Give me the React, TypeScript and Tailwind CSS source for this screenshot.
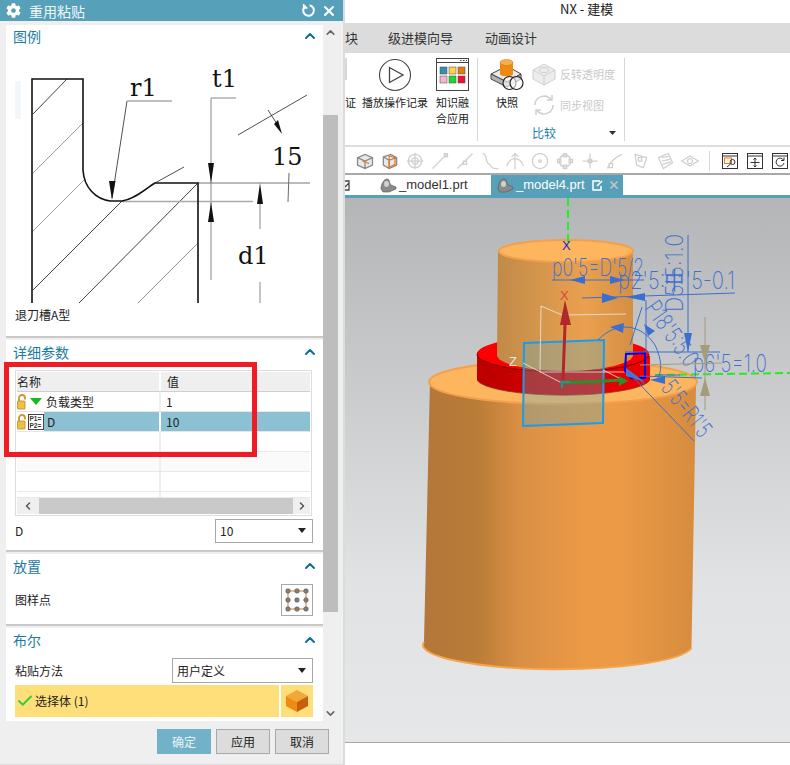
import React from 'react';
import { ChevronUp, ChevronDown, ChevronLeft, ChevronRight, X, Check } from 'lucide-react';
import { FaCog } from 'react-icons/fa';

const fontStack = { fontFamily: '"Noto Sans CJK SC", "Liberation Sans", sans-serif' };

const Lock: React.FC = () => (
  <svg width="11" height="16" viewBox="0 0 11 16" className="shrink-0">
    <path d="M2 8V4a3 3 0 0 1 6 0v1.5" fill="none" stroke="#c79a2b" strokeWidth="1.8" />
    <rect x="0.5" y="7" width="7.5" height="8" rx="0.5" fill="#f0c040" stroke="#b98a20" strokeWidth="0.8" />
  </svg>
);

const Caret: React.FC = () => (
  <svg width="8" height="5" viewBox="0 0 8 5" className="shrink-0">
    <path d="M0 0h8L4 5z" fill="#222" />
  </svg>
);

const Section: React.FC<{ title: string; className: string; headerClass?: string; children: React.ReactNode }> = ({ title, className, headerClass = 'h-[24px]', children }) => (
  <section className={`bg-white border-b-2 border-[#c9c9c9] shrink-0 ${className}`}>
    <div className={`flex items-center justify-between pl-[7px] pr-[5px] ${headerClass}`}>
      <span className="text-[14px] text-[#1c7ba3] leading-none">{title}</span>
      <ChevronUp size={16} strokeWidth={3} className="text-[#0f6f92]" />
    </div>
    {children}
  </section>
);

const Illustration: React.FC = () => (
  <svg width="317" height="258" viewBox="6 47 317 258" className="block" style={{ fontFamily: '"DejaVu Serif", serif' }}>
    <rect x="15" y="81" width="6" height="38" rx="2" fill="#f2f7fc" />
    <g stroke="#555" strokeWidth="0.8" fill="none">
      <path d="M33 114 67 79" stroke="#111" />
      <path d="M33 173 83 123" stroke="#888" />
      <path d="M33 231 84 180" stroke="#888" />
      <path d="M33 290 122 201" stroke="#111" />
      <path d="M79 303 198 183" stroke="#111" />
      <path d="M138 303 198 243" stroke="#777" />
      <path d="M155 183 184 167" stroke="#222" />
      <path d="M127 101 112 198" stroke="#222" />
      <path d="M238 135 307 95" stroke="#222" />
      <path d="M268 110 277 124" stroke="#222" />
      <path d="M289 173 288 202" stroke="#444" />
    </g>
    <path d="M127 101H172" stroke="#aaa" strokeWidth="1.5" />
    <path d="M211 280V98H236" fill="none" stroke="#888" strokeWidth="1" />
    <path d="M198 183H310" stroke="#777" strokeWidth="1" />
    <path d="M122 201.5H253" stroke="#aaa" strokeWidth="1.6" />
    <path d="M260 204V229M260 282V303" stroke="#888" strokeWidth="1" />
    <path d="M32 303V79H83V170C84 188 96 199 110 201H122C135 199 145 189 155 183H198V303" fill="none" stroke="#111" strokeWidth="1.6" />
    <path d="M112 200 109 181H115.500Z M211 183 208 163H214Z M211 202 208 222H214Z M260 183 257 204H263Z M282 134 274 124 278 120Z" fill="#111" />
    <text x="130" y="96" fontSize="24" fill="#111">r1</text>
    <text x="212" y="87" fontSize="24" fill="#111">t1</text>
    <text x="272" y="165" fontSize="24" fill="#111">15</text>
    <text x="238" y="264" fontSize="24" fill="#111">d1</text>
  </svg>
);

const ParamsTable: React.FC = () => (
  <div className="ml-[9px] mr-[11px] h-[146px] border border-[#dcdcdc] p-px flex flex-col overflow-hidden">
    <div className="h-[20px] flex bg-[#efefef] border-b border-[#cfcfcf] text-[12px] text-[#222] leading-[20px] shrink-0">
      <div className="w-[144px] border-r-2 border-white">名称</div>
      <div className="pl-[6px]">值</div>
    </div>
    <div className="h-[20px] flex border-b border-[#e6e6e6] text-[12px] text-[#222] shrink-0">
      <div className="w-[144px] border-r-2 border-[#eeeeee] flex items-center">
        <Lock />
        <svg width="12" height="7" viewBox="0 0 12 7" className="ml-[2px] mr-[4px]"><path d="M0 0h12L6 7z" fill="#1bb81b" /></svg>
        负载类型
      </div>
      <div className="pl-[5px] leading-[20px]">1</div>
    </div>
    <div className="h-[20px] flex border-b border-[#e6e6e6] text-[12px] text-[#222] shrink-0">
      <div className="w-[144px] border-r-2 border-white flex items-center">
        <Lock />
        <svg width="16" height="16" viewBox="0 0 16 16" className="shrink-0">
          <rect x="0.500" y="0.500" width="15" height="15" fill="#fff" stroke="#444" />
          <text x="1.500" y="7" fontSize="6.500" fontWeight="700" fill="#333" fontFamily="Liberation Sans">P1=</text>
          <text x="1.500" y="14" fontSize="6.500" fontWeight="700" fill="#333" fontFamily="Liberation Sans">P2=</text>
        </svg>
        <div className="flex-1 h-full bg-[#8cc1d3] pl-[3px] leading-[20px]">D</div>
      </div>
      <div className="flex-1 bg-[#8cc1d3] pl-[5px] leading-[20px]">10</div>
    </div>
    {['bg-white', 'bg-[#fafafa]', 'bg-white', 'bg-white'].map((bg, i) => (
      <div key={i} className={`${i === 3 ? 'h-[6px]' : 'h-[20px]'} flex border-b border-[#e9e9e9] shrink-0 ${bg}`}>
        <div className="w-[144px] border-r-2 border-[#eeeeee]" />
      </div>
    ))}
    <div className="h-[16px] bg-[#efefef] flex items-center shrink-0">
      <div className="w-[22px] flex justify-center"><ChevronLeft size={12} strokeWidth={3} className="text-[#555]" /></div>
      <div className="w-[254px] h-full bg-[#c9c9c9]" />
      <div className="flex-1 flex justify-center"><ChevronRight size={12} strokeWidth={3} className="text-[#555]" /></div>
    </div>
  </div>
);

const Select: React.FC<{ value: string; className: string }> = ({ value, className }) => (
  <div className={`border border-[#a8a8a8] bg-white flex items-center justify-between pl-[4px] pr-[6px] text-[12px] text-[#222] ${className}`}>
    <span>{value}</span>
    <Caret />
  </div>
);

const PatternIcon: React.FC = () => (
  <svg width="24" height="24" viewBox="0 0 24 24">
    <rect x="3" y="3" width="18" height="18" fill="none" stroke="#e0791a" strokeWidth="1" />
    {[3, 12, 21].map((y) => [3, 12, 21].map((x) => (
      <circle key={`${x}-${y}`} cx={x} cy={y} r="2.300" fill="#808080" stroke="#444" strokeWidth="0.500" />
    )))}
  </svg>
);

const CubeIcon: React.FC = () => (
  <svg width="24" height="24" viewBox="0 0 24 24">
    <path d="M12 1 23 7 12 13 1 7Z" fill="#f3a63a" />
    <path d="M1 7 12 13V23L1 17Z" fill="#ef8a12" />
    <path d="M23 7 12 13V23L23 17Z" fill="#c75f0c" />
  </svg>
);

const ActionButton: React.FC<{ label: string; primary?: boolean }> = ({ label, primary }) => (
  <div className={`w-[54px] h-[25px] flex items-center justify-center text-[12px] ${primary ? 'bg-[#72b2c8] text-[#e8f3f6]' : 'bg-[#dcdcdc] border border-[#a8a8a8] text-[#222]'}`}>
    {label}
  </div>
);

const Dialog: React.FC = () => (
  <div className="relative w-[345px] h-[765px] shrink-0 bg-[#efefef] border-r-2 border-b border-[#dcdcdc] flex flex-col">
    <header className="h-[21px] bg-[#57a0ba] flex items-center text-white shrink-0 pl-[6px] pr-[6px]">
      <FaCog size={15} />
      <span className="ml-[8px] text-[14px] leading-none text-[#eef6f8]">重用粘贴</span>
      <svg width="15" height="15" viewBox="0 0 14 14" className="ml-auto" fill="none" stroke="#fff" strokeWidth="1.900">
        <path d="M4.500 2.600A5 5 0 1 0 8 2" />
        <path d="M2.500 1v3.500H6" strokeWidth="1.500" />
      </svg>
      <X size={16} strokeWidth={3} className="ml-[5px]" />
    </header>
    <div className="h-[700px] flex pl-[6px] pt-[4px] overflow-hidden shrink-0">
      <div className="w-[317px] flex flex-col gap-[2px] overflow-hidden">
        <Section title="图例" className="h-[313px]" headerClass="h-[22px]">
          <Illustration />
          <div className="pl-[9px] text-[12px] text-[#222] leading-[16px] mt-[2px]">退刀槽A型</div>
        </Section>
        <Section title="详细参数" className="h-[212px]">
          <div className="pt-[6px]"><ParamsTable /></div>
          <div className="flex items-center justify-between pl-[9px] pr-[10px] h-[23px] mt-[3px] text-[12px] text-[#222]">
            <span>D</span>
            <Select value="10" className="w-[98px] h-[24px]" />
          </div>
        </Section>
        <Section title="放置" className="h-[72px]">
          <div className="flex items-center justify-between pl-[9px] pr-[10px] text-[12px] text-[#222] mt-[6px]">
            <span>图样点</span>
            <div className="w-[32px] h-[32px] border border-[#a8a8a8] flex items-center justify-center"><PatternIcon /></div>
          </div>
        </Section>
        <div className="bg-white shrink-0 h-[93px]">
          <div className="h-[24px] flex items-center justify-between pl-[7px] pr-[5px]">
            <span className="text-[14px] text-[#1c7ba3] leading-none">布尔</span>
            <ChevronUp size={16} strokeWidth={3} className="text-[#0f6f92]" />
          </div>
          <div className="flex items-center justify-between pl-[9px] pr-[10px] h-[25px] mt-[6px] text-[12px] text-[#222]">
            <span>粘贴方法</span>
            <Select value="用户定义" className="w-[141px] h-[25px]" />
          </div>
          <div className="flex gap-[2px] pl-[9px] pr-[10px] mt-[2px] h-[32px] text-[12px] text-[#222]">
            <div className="flex-1 bg-[#ffdf7a] flex items-center pl-px">
              <Check size={18} strokeWidth={2.500} className="text-[#2ecf3a] mr-[1px]" />
              选择体 (1)
            </div>
            <div className="w-[32px] bg-[#ffdf7a] flex items-center justify-center"><CubeIcon /></div>
          </div>
        </div>
      </div>
      <div className="w-[15px] flex flex-col items-center text-[#666] shrink-0">
        <ChevronUp size={13} strokeWidth={3} className="mt-[1px] mb-[76px] shrink-0" />
        <div className="w-full h-[497px] bg-[#bdbdbd] shrink-0" />
        <ChevronDown size={13} strokeWidth={3} className="mt-[95px] shrink-0" />
      </div>
    </div>
    <footer className="flex-1 flex gap-[5px] pl-[157px] pt-[8px]">
      <ActionButton label="确定" primary />
      <ActionButton label="应用" />
      <ActionButton label="取消" />
    </footer>
    <div className="absolute left-[4px] top-[362px] w-[253px] h-[95px] border-[5px] border-[#ee1c25]" />
  </div>
);

const PlayIcon: React.FC = () => (
  <svg width="34" height="34" viewBox="0 0 34 34" fill="none" stroke="#444" strokeWidth="1.100">
    <circle cx="17" cy="17" r="15.500" />
    <path d="M11.500 9.500V24.500L25 17Z" strokeWidth="1.300" />
  </svg>
);

const KnowledgeIcon: React.FC = () => (
  <svg width="33" height="33" viewBox="0 0 33 33">
    <rect x="0.500" y="0.500" width="32" height="32" fill="#fff" stroke="#444" />
    <path d="M1 4.500H32" stroke="#444" />
    <path d="M24 2.500h1.500M27 2.500h1.500M30 2.500h1" stroke="#444" />
    <rect x="4" y="9" width="7" height="7" fill="#3a8eb0" stroke="#444" strokeWidth="0.500" />
    <rect x="13" y="9" width="7" height="7" fill="#ffd24a" stroke="#444" strokeWidth="0.500" />
    <rect x="22" y="9" width="7" height="7" fill="#e67e0c" stroke="#444" strokeWidth="0.500" />
    <rect x="4" y="18" width="7" height="7" fill="#f6b6cf" stroke="#444" strokeWidth="0.500" />
    <rect x="13" y="18" width="7" height="7" fill="#16dc2c" stroke="#444" strokeWidth="0.500" />
    <rect x="22" y="18" width="7" height="7" fill="#f5112c" stroke="#444" strokeWidth="0.500" />
  </svg>
);

const SnapshotIcon: React.FC = () => (
  <svg width="34" height="33" viewBox="0 0 34 33">
    <path d="M1 16 17 8 31 16 17 24Z" fill="#e9e9e9" stroke="#444" />
    <path d="M1 16V21L17 29 31 21V16L17 24Z" fill="#b5b5b5" stroke="#444" />
    <path d="M10 4V16C10 19 23 19 23 16V4Z" fill="#ee8a12" />
    <ellipse cx="16.500" cy="4.500" rx="6.500" ry="3" fill="#f7b04a" stroke="#c96f0c" strokeWidth="0.500" />
    <circle cx="19.500" cy="25" r="6.500" fill="#fff" fillOpacity="0.600" stroke="#222" strokeWidth="1.200" />
    <circle cx="26.500" cy="25" r="6.500" fill="#fff" fillOpacity="0.600" stroke="#222" strokeWidth="1.200" />
  </svg>
);

const Ribbon: React.FC = () => (
  <div className="h-[94px] bg-white border-b-2 border-[#dedede] flex text-[11px] text-[#222] leading-[16px] shrink-0">
    <div className="w-[133px] flex shrink-0 border-r border-[#d6d6d6] mt-[5px] mb-[4px]">
      <div className="w-[13px] shrink-0 overflow-hidden">
        <div className="w-[2px] h-[22px] bg-[#d8d8d8] mb-[14px]" />
        <div className="mt-[3px]">证</div>
      </div>
      <div className="w-[74px] flex flex-col items-center shrink-0">
        <PlayIcon />
        <div className="mt-[2px] h-[16px] whitespace-nowrap">播放操作记录</div>
      </div>
      <div className="w-[33px] ml-[4px] flex flex-col items-center shrink-0">
        <KnowledgeIcon />
        <div className="mt-[3px] text-center">知识融<br />合应用</div>
      </div>
    </div>
    <div className="w-[147px] flex shrink-0 border-r border-[#d6d6d6] mt-[5px] mb-[4px]">
      <div className="w-[54px] flex flex-col items-center shrink-0 pl-[4px]">
        <SnapshotIcon />
        <div className="mt-[3px]">快照</div>
      </div>
      <div className="flex-1 flex flex-col relative text-[#c9c9c9]">
        <div className="h-[33px] flex items-center">
          <svg width="24" height="24" viewBox="0 0 24 24" fill="#ececec" stroke="#d0d0d0">
            <path d="M12 2 23 8V17L12 23 1 17V8Z" />
            <path d="M1 8 12 14 23 8M12 14V23" />
            <ellipse cx="12" cy="8" rx="5" ry="2.500" />
          </svg>
          <span className="ml-[4px] whitespace-nowrap">反转透明度</span>
        </div>
        <div className="h-[34px] flex items-center">
          <svg width="24" height="24" viewBox="0 0 24 24" fill="none" stroke="#cfcfcf" strokeWidth="1.500">
            <path d="M3 12a9 9 0 0 1 16-5.500M21 12a9 9 0 0 1-16 5.500" />
            <path d="M20 2v5h-5M4 22v-5h5" />
          </svg>
          <span className="ml-[4px] whitespace-nowrap">同步视图</span>
        </div>
        <div className="flex items-center justify-between pr-[8px] mt-[4px]">
          <span className="text-[#1e7fae] text-[12px]">比较</span>
          <svg width="7" height="4" viewBox="0 0 7 4"><path d="M0 0h7L3.500 4z" fill="#333" /></svg>
        </div>
      </div>
    </div>
  </div>
);

const grayIcons = [
  'M3 17 12 21 21 17V8L12 4 3 8Z M3 8 12 12 21 8 M12 12V21',
  'M4 7 13 4 20 8V17L11 21 4 17Z M4 7 11 11 20 8 M11 11V21',
  'M12 4a8 8 0 1 0 .01 0 M12 2V22 M2 12H22 M12 8a4 4 0 1 0 .01 0',
  'M3 21 20 4 M17 3h4v4h-4z',
  'M3 21 21 3 M10 12h4v4h-4z',
  'M3 3C10 3 5 16 12 16 14 22 18 21 22 21',
  'M2 18C4 12 8 9 12 9 16 9 20 12 22 18 M12 3V22 M8 7 12 3 16 7',
  'M12 3a9 9 0 1 0 .01 0 M12 10.500a1.500 1.500 0 1 0 .01 0',
  'M12 5a7 7 0 1 0 .01 0 M10 3h4v4h-4z M10 17h4v4h-4z M3 10h4v4H3z M17 10h4v4h-4z',
  'M12 3V21 M3 12H21 M10 10h4v4h-4z',
  'M3 21C5 13 12 8 20 4 M5 15h4v5H5z',
  'M6 4 20 8 16 20 8 17Z M10 8h4v4h-4z',
  'M4 8 16 3 21 14 10 21Z M8 8 18 6 M8 12 18 10 M9 16 19 13',
  'M2 12 12 6 22 12 12 18Z M12 9a3 3 0 1 0 .01 0',
];

const WindowIcon: React.FC<{ children: React.ReactNode }> = ({ children }) => (
  <svg width="16" height="16" viewBox="0 0 16 16" fill="none" stroke="#333" strokeWidth="1">
    <rect x="0.500" y="0.500" width="15" height="15" />
    <path d="M0 3H16" />
    {children}
  </svg>
);

const Toolbar: React.FC = () => (
  <div className="h-[28px] bg-white border-b-2 border-[#a8a8a8] flex items-center shrink-0 pl-[7px] pt-[1px]">
    {grayIcons.map((d, i) => (
      <div key={i} className="w-[25px] flex justify-center shrink-0">
        <svg width="20" height="20" viewBox="0 0 24 24" fill={i < 2 ? '#e8e8e8' : 'none'} stroke={i < 2 ? '#888' : '#cfcfcf'} strokeWidth="1.500">
          <path d={d} />
          {i === 0 && <path d="M9 12 17 15" stroke="#e8791a" strokeWidth="1.500" />}
          {i === 1 && <path d="M11 6 18 8V16L11 20Z" stroke="#e8791a" fill="none" strokeWidth="1.500" />}
        </svg>
      </div>
    ))}
    <div className="w-px h-[20px] bg-[#d8d8d8] ml-[7px] mr-[12px]" />
    <div className="flex gap-[9px]">
      <WindowIcon><rect x="2.500" y="5" width="7" height="5.500" stroke="#e8791a" /><circle cx="10.500" cy="9" r="2.500" /><path d="M8.500 11 5 14" /></WindowIcon>
      <WindowIcon><path d="M8 5V14M3.500 9.500H12.500M6.500 6.500 8 5 9.500 6.500M6.500 12.500 8 14 9.500 12.500" /></WindowIcon>
      <WindowIcon><path d="M11.500 7A4 4 0 1 0 12 10M12 4.500V7.500H9" /></WindowIcon>
    </div>
  </div>
);

const PartIcon: React.FC = () => (
  <svg width="17" height="15" viewBox="0 0 17 15" className="shrink-0">
    <path d="M1 11C1 6 4 1 7 1 10 1 9 5 11 7L16 9V11L9 14 3 14Z" fill="#8a8a8a" stroke="#555" strokeWidth="0.600" />
    <ellipse cx="6.500" cy="6" rx="2.500" ry="3" fill="#d0d0d0" />
  </svg>
);

const Tabs: React.FC = () => (
  <div className="h-[23px] flex shrink-0 bg-white border-b-[3px] border-[#57a0ba] text-[13px] text-[#333]" style={{ fontFamily: '"Liberation Sans", "Noto Sans CJK SC", sans-serif' }}>
    <div className="w-[146px] flex items-center shrink-0">
      <svg width="5" height="11" viewBox="0 0 5 11" className="shrink-0 mr-[30px]" fill="none" stroke="#444" strokeWidth="1.300"><path d="M0 1H4V10H0M0 7 4 3" /></svg>
      <PartIcon />
      <span className="ml-[2px]">_model1.prt</span>
    </div>
    <div className="w-[132px] h-[20px] bg-[#57a0ba] flex items-center pl-[6px] text-white shrink-0">
      <PartIcon />
      <span className="ml-[2px]">_model4.prt</span>
      <svg width="11" height="11" viewBox="0 0 11 11" className="ml-[7px]" fill="none" stroke="#fff" strokeWidth="1.500"><path d="M8 1H1V10H9V6M5 6 10 1" /></svg>
      <X size={12} strokeWidth={3.500} className="ml-[5px] text-[#c4c4c4]" />
    </div>
  </div>
);

const dimensionFont = { fontFamily: 'Inter, "Liberation Sans", sans-serif', fontWeight: 200 };

const ModelView: React.FC = () => (
  <svg className="absolute inset-0" width="445" height="545" viewBox="345 198 445 545">
    <defs>
      <linearGradient id="cyl" x1="0" y1="0" x2="1" y2="0">
        <stop offset="0" stopColor="#b4763a" />
        <stop offset="0.2" stopColor="#ba7c38" />
        <stop offset="0.35" stopColor="#d98f44" />
        <stop offset="0.6" stopColor="#ec9a46" />
        <stop offset="0.72" stopColor="#ec9a46" />
        <stop offset="1" stopColor="#d68c3e" />
      </linearGradient>
      <linearGradient id="cylTop" x1="0" y1="0" x2="1" y2="0">
        <stop offset="0" stopColor="#c08a48" />
        <stop offset="0.3" stopColor="#d4954c" />
        <stop offset="0.65" stopColor="#eaa04e" />
        <stop offset="1" stopColor="#d48f44" />
      </linearGradient>
      <linearGradient id="disc" x1="0" y1="0" x2="1" y2="0">
        <stop offset="0" stopColor="#bb0000" />
        <stop offset="0.6" stopColor="#dd0000" />
        <stop offset="1" stopColor="#ee0000" />
      </linearGradient>
    </defs>

    <path d="M424 642 430 380 696 386 691.500 648A134 24 0 0 1 424 642Z" fill="url(#cyl)" />
    <path d="M424 642A134 24 0 0 0 691.500 648" fill="none" stroke="#f6a349" strokeWidth="2" />
    <ellipse cx="563" cy="382" rx="134" ry="22" fill="#fdb65d" stroke="#f49f4c" strokeWidth="2" />

    <path d="M477 352V380A87 17 0 0 0 650 380V356Z" fill="url(#disc)" />
    <ellipse cx="563" cy="354" rx="86" ry="18" fill="#fb0000" />
    <path d="M477 354A86 18 0 0 0 649 354" fill="none" stroke="#700000" strokeWidth="1" />
    <path d="M477 380A87 17 0 0 0 650 380" fill="none" stroke="#7a3a2a" strokeWidth="0.800" />

    <path d="M498 251 497 355A68 16 0 0 0 633 355V251Z" fill="url(#cylTop)" />
    <ellipse cx="566" cy="251" rx="67" ry="11" fill="#fdb65d" stroke="#f49f4c" strokeWidth="2" />

    <path d="M524 343 604 340 603 423 523 426Z" fill="#64a8b7" fillOpacity="0.350" stroke="#1a9cec" strokeWidth="2" />

    <path d="M541 306 562 315 626 314M541 306 540 372H626M523 363 560 382M603 370 623 380" fill="none" stroke="#e8e8e8" strokeWidth="0.800" />

    <path d="M568 198V245M655 375 790 373" fill="none" stroke="#22ee22" strokeWidth="2" strokeDasharray="8 4" />
    <path d="M563 380 565 325" stroke="#b0282c" strokeWidth="3" />
    <path d="M565 300 560 325H571Z" fill="#b0282c" />
    <path d="M561 383 625 380" stroke="#2a8f2e" strokeWidth="3" />
    <path d="M560 382H570M562 382V388" stroke="#1a9a8c" strokeWidth="2" />
    <path d="M628 381 619 376V386Z" fill="#2a8f2e" />
    <text x="560" y="300" fontSize="13" fill="#d9453a" fontFamily="Liberation Sans">X</text>
    <text x="562" y="250" fontSize="13" fill="#2323d0" fontFamily="Liberation Sans">X</text>
    <text x="509" y="366" fontSize="13" fill="#f0e0e0" fontFamily="Liberation Sans">Z</text>
    <path d="M626 354 645 353V378H631L625 371Z" fill="none" stroke="#0000ee" strokeWidth="2" />
    <path d="M626 368 645 382 626 376Z" fill="#4a78d0" />

    <g fill="none" stroke="#3a6fd0" strokeWidth="1">
      <path d="M552 280H644M582 298 735 293M646 300V352M688 235V352M625 352 720 352" />
      <path d="M598 340C615 322 640 322 655 345 662 360 662 370 658 378" />
      <path d="M642 307 630 345M628 372 694 441 M640 380 645 385" />
      <path d="M640 376 702 378 M680 375H655" />
    </g>
    <path d="M570 280 585 276V284ZM625 280 610 276V284ZM618 298 602 293V303ZM626 297 645 293V301ZM610 327 624 323 623 333ZM655 331 644 324 648 336ZM688 352 684 333H692ZM650 380 665 376V384Z" fill="#3a6fd0" />
    <g fill="#3f70d2" fontSize="24" style={dimensionFont}>
      <text x="552" y="276" textLength="92" lengthAdjust="spacingAndGlyphs">p0'5=D'5/2</text>
      <text x="618" y="289" textLength="117" lengthAdjust="spacingAndGlyphs">p2'5:中'5-0.1</text>
      <text transform="translate(683 312) rotate(-90)" textLength="78" lengthAdjust="spacingAndGlyphs">D5'5:1.0</text>
      <text transform="translate(644 308) rotate(55)" textLength="74" lengthAdjust="spacingAndGlyphs">P18'5:5.0</text>
      <text x="693" y="372" textLength="74" lengthAdjust="spacingAndGlyphs">p6'5=1.0</text>
      <text transform="translate(660 388) rotate(52)" textLength="65" lengthAdjust="spacingAndGlyphs">5'5=R1'5</text>
    </g>
    <g stroke="#a49d7c" strokeWidth="1" fill="none"><path d="M705 317V410M640 365 722 363" /></g>
    <path d="M705 363 700 345H710ZM705 378 700 396H710Z" fill="#a49d7c" />
  </svg>
);

const App: React.FC = () => (
  <div className="w-[790px] h-[765px] flex bg-white overflow-hidden" style={fontStack}>
    <Dialog />
    <main className="flex-1 flex flex-col min-w-0">
      <div className="h-[23px] flex items-center pb-[5px] pl-[215px] text-[13px] text-[#222] shrink-0">NX - 建模</div>
      <nav className="h-[30px] bg-[#dcdcdc] flex items-center text-[13px] text-[#333] shrink-0">
        <span className="w-[43px] shrink-0">块</span>
        <span className="w-[97px] shrink-0">级进模向导</span>
        <span>动画设计</span>
      </nav>
      <Ribbon />
      <Toolbar />
      <Tabs />
      <div className="relative h-[545px] shrink-0 bg-gradient-to-b from-[#b4b5b7] via-[#e1e2e4] via-70% to-[#e6e7e8] border-b border-[#a8a8a8] overflow-hidden">
        <ModelView />
      </div>
    </main>
  </div>
);

export default App;
